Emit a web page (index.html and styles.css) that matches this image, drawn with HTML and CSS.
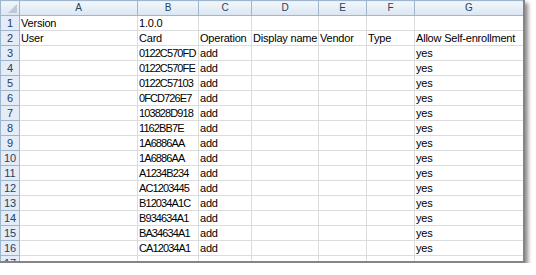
FILE: index.html
```html
<!DOCTYPE html>
<html lang="en">
<head>
  <meta charset="UTF-8" />
  <title>Self-enrollment import</title>
  <link rel="stylesheet" href="styles.css">
</head>
<body>
  <div class="sheet">
    <table class="grid">
      <colgroup>
        <col class="w-num">
        <col class="w-a">
        <col class="w-b">
        <col class="w-c">
        <col class="w-d">
        <col class="w-e">
        <col class="w-f">
        <col class="w-g">
      </colgroup>
      <thead>
        <tr>
          <th class="corner"><span class="corner-mark"></span></th>
          <th>A</th><th>B</th><th>C</th><th>D</th><th>E</th><th>F</th><th>G</th>
        </tr>
      </thead>
      <tbody id="rows">
        <tr><th>1</th><td>Version</td><td>1.0.0</td><td></td><td></td><td></td><td></td><td></td></tr>
        <tr><th>2</th><td>User</td><td>Card</td><td>Operation</td><td>Display name</td><td>Vendor</td><td>Type</td><td>Allow Self-enrollment</td></tr>
        <tr><th>3</th><td></td><td class="card">0122C570FD</td><td>add</td><td></td><td></td><td></td><td>yes</td></tr>
        <tr><th>4</th><td></td><td class="card">0122C570FE</td><td>add</td><td></td><td></td><td></td><td>yes</td></tr>
        <tr><th>5</th><td></td><td class="card">0122C57103</td><td>add</td><td></td><td></td><td></td><td>yes</td></tr>
        <tr><th>6</th><td></td><td class="card">0FCD726E7</td><td>add</td><td></td><td></td><td></td><td>yes</td></tr>
        <tr><th>7</th><td></td><td class="card">103828D918</td><td>add</td><td></td><td></td><td></td><td>yes</td></tr>
        <tr><th>8</th><td></td><td class="card">1162BB7E</td><td>add</td><td></td><td></td><td></td><td>yes</td></tr>
        <tr><th>9</th><td></td><td class="card">1A6886AA</td><td>add</td><td></td><td></td><td></td><td>yes</td></tr>
        <tr><th>10</th><td></td><td class="card">1A6886AA</td><td>add</td><td></td><td></td><td></td><td>yes</td></tr>
        <tr><th>11</th><td></td><td class="card">A1234B234</td><td>add</td><td></td><td></td><td></td><td>yes</td></tr>
        <tr><th>12</th><td></td><td class="card">AC1203445</td><td>add</td><td></td><td></td><td></td><td>yes</td></tr>
        <tr><th>13</th><td></td><td class="card">B12034A1C</td><td>add</td><td></td><td></td><td></td><td>yes</td></tr>
        <tr><th>14</th><td></td><td class="card">B934634A1</td><td>add</td><td></td><td></td><td></td><td>yes</td></tr>
        <tr><th>15</th><td></td><td class="card">BA34634A1</td><td>add</td><td></td><td></td><td></td><td>yes</td></tr>
        <tr><th>16</th><td></td><td class="card">CA12034A1</td><td>add</td><td></td><td></td><td></td><td>yes</td></tr>
        <tr><th>17</th><td></td><td></td><td></td><td></td><td></td><td></td><td></td></tr>
      </tbody>
    </table>
  </div>
</body>
</html>
```

FILE: styles.css
```css
body {
  margin: 0;
  background: #fff;
  font-family: 'Liberation Sans', Arial, sans-serif;
  font-size: 11px;
  color: #000;
}

.sheet {
  width: 523px;
  height: 261px;
  overflow: hidden;
  border-right: 2px solid #858585;
  border-bottom: 2px solid #858585;
  box-shadow: 3px 3px 4px rgba(0, 0, 0, 0.45);
}

.grid {
  table-layout: fixed;
  border-collapse: collapse;
  width: 523px;
}

.w-num { width: 19px; }
.w-a { width: 118px; }
.w-b { width: 61px; }
.w-c { width: 53px; }
.w-d { width: 67px; }
.w-e { width: 48px; }
.w-f { width: 48px; }
.w-g { width: 109px; }

td, th {
  height: 14px;
  padding: 0 0 0 1px;
  line-height: 14px;
  white-space: nowrap;
  overflow: hidden;
  border: 1px solid #dadcdd;
  font-weight: normal;
}

td {
  text-align: left;
  vertical-align: bottom;
  letter-spacing: -0.2px;
}

td.card {
  letter-spacing: -0.9px;
}

thead th {
  background: linear-gradient(#f1f6fb, #dbe6f2);
  border: 1px solid #9eb6ce;
  color: #27415f;
  text-align: center;
  font-size: 10px;
  padding: 0;
}

tbody th {
  background: #e4ecf7;
  border: 1px solid #9eb6ce;
  color: #27415f;
  text-align: center;
  padding: 0;
}

.corner {
  position: relative;
}

.corner-mark {
  position: absolute;
  right: 2px;
  bottom: 2px;
  width: 0;
  height: 0;
  border-left: 9px solid transparent;
  border-bottom: 9px solid #c0cad6;
}
```
